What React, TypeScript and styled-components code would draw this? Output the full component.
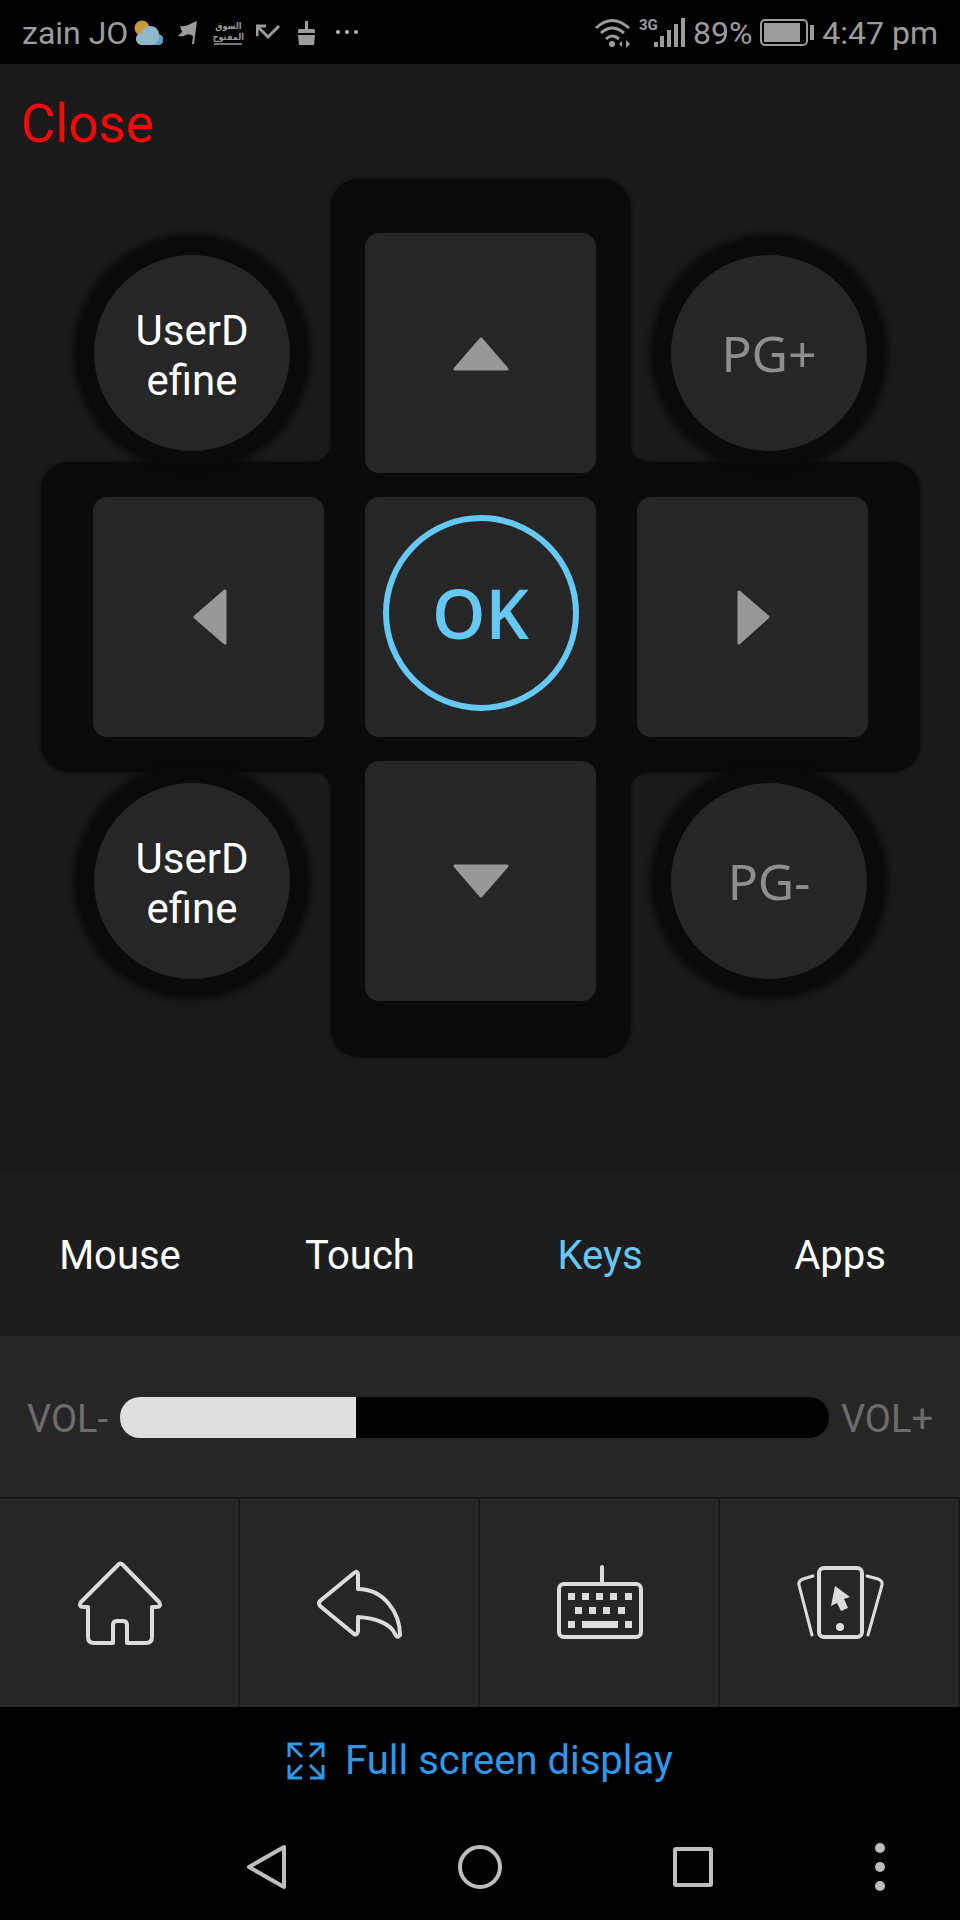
import { useState } from "react";
import styled, { createGlobalStyle, css } from "styled-components";

const color = {
  statusText: "#9c9c9c",
  panel: "#1a1a1a",
  well: "#0a0a0a",
  key: "#262626",
  keyGlyph: "#989898",
  accent: "#66c9f5",
  tabs: "#1d1d1d",
  icon: "#dcdcdc",
  link: "#2f98ea",
  nav: "#bebebe",
};

const GlobalStyle = createGlobalStyle`
  *, *::before, *::after { box-sizing: border-box; }
  body {
    margin: 0;
    background: #000;
    color: #fff;
    font-family: Roboto, "Liberation Sans", sans-serif;
  }
  button, input { font: inherit; color: inherit; }
  button { border: 0; padding: 0; margin: 0; background: none; cursor: pointer; }
  svg { display: block; }
`;

const Screen = styled.div`
  display: flex;
  flex-direction: column;
  min-height: 100vh;
  background: #000;
`;

/* Status bar */

const StatusBar = styled.header`
  display: flex;
  align-items: center;
  justify-content: space-between;
  height: 64px;
  padding: 2px 22px 0;
  font-size: 32px;
  line-height: 40px;
  color: ${color.statusText};
  white-space: nowrap;
`;

const StatusGroup = styled.div<{ $gap: number }>`
  display: flex;
  align-items: center;
  gap: ${(p) => p.$gap}px;
`;

const Carrier = styled.div`
  display: flex;
  align-items: center;
  gap: 6px;
`;

const MarketBadge = styled.span`
  display: flex;
  flex-direction: column;
  align-items: center;
  width: 28px;
  border-bottom: 2px solid #777;
  font: bold 9px/11px "DejaVu Sans Condensed", "DejaVu Sans", sans-serif;
`;

const Signal = styled.div`
  display: flex;
  align-items: flex-start;
`;

const Network = styled.span`
  width: 15px;
  font-size: 15px;
  line-height: 14px;
  font-weight: 700;
`;

/* Remote panel */

const Panel = styled.main`
  background: ${color.panel};
`;

const CloseRow = styled.div`
  display: flex;
  padding: 28px 21px 0;
`;

const CloseButton = styled.button`
  && { color: #f2090c; }
  font-size: 53px;
  line-height: 64px;
`;

const Pad = styled.div`
  display: grid;
  grid-template-columns: repeat(3, 1fr);
  grid-template-rows: repeat(3, 240px);
  column-gap: 41px;
  row-gap: 24px;
  padding: 77px 92px 168px 93px;
`;

const arm = css`
  border-radius: 28px;
  background: ${color.well};
  box-shadow: 0 0 4px ${color.well};
`;

const VerticalArm = styled.div`
  ${arm}
  grid-area: 1 / 2 / 4 / 3;
  margin: -54px -34px -56px;
`;

const HorizontalArm = styled.div`
  ${arm}
  grid-area: 2 / 1 / 3 / 4;
  margin: -35px -52px;
`;

const fillet = (at: string) =>
  `radial-gradient(circle at ${at}, transparent 19px, ${color.well} 21px)`;

/* Rounds the four inner corners where the two arms meet. */
const Fillets = styled.div`
  grid-area: 2 / 2 / 3 / 3;
  margin: -55px -54px;
  background:
    ${fillet("0 0")} 0 0 / 20px 20px no-repeat,
    ${fillet("100% 0")} 100% 0 / 20px 20px no-repeat,
    ${fillet("0 100%")} 0 100% / 20px 20px no-repeat,
    ${fillet("100% 100%")} 100% 100% / 20px 20px no-repeat;
`;

const PadKey = styled.button<{ $row: number; $col: number }>`
  grid-row: ${(p) => p.$row};
  grid-column: ${(p) => p.$col};
  display: flex;
  align-items: center;
  justify-content: center;
  border-radius: 14px;
  background: ${color.key};
`;

const OkKey = styled(PadKey)`
  padding-bottom: 8px;
`;

const OkRing = styled.span`
  display: flex;
  align-items: center;
  justify-content: center;
  width: 196px;
  height: 196px;
  border: 6px solid ${color.accent};
  border-radius: 50%;
  color: ${color.accent};
  font-family: "Open Sans", "Noto Sans", sans-serif;
  font-size: 68px;
  line-height: 72px;
  font-weight: 600;
`;

const RoundKey = styled.button<{ $row: number; $side: "start" | "end" }>`
  grid-row: ${(p) => p.$row};
  grid-column: ${(p) => (p.$side === "start" ? 1 : 3)};
  justify-self: ${(p) => p.$side};
  align-self: center;
  width: 196px;
  height: 196px;
  margin: 0 1px;
  padding: 6px 40px 0;
  border-radius: 50%;
  background: ${color.key};
  box-shadow: 0 0 6px 21px ${color.well};
  overflow-wrap: anywhere;
  && { color: #fff; }
  font-size: 42px;
  line-height: 50px;
`;

const PageKey = styled(RoundKey)`
  padding-top: 0;
  && { color: #8e8e8e; }
  font-family: "Noto Sans", "Open Sans", sans-serif;
  font-size: 50px;
`;

/* Tabs */

const Tabs = styled.nav`
  display: grid;
  grid-template-columns: repeat(4, 1fr);
  height: 167px;
  padding-top: 6px;
  background: linear-gradient(#161616, ${color.tabs} 6px);
`;

const Tab = styled.button<{ $active: boolean }>`
  && { color: ${(p) => (p.$active ? color.accent : "#fff")}; }
  font-size: 40px;
  line-height: 48px;
`;

/* Volume */

const Volume = styled.section`
  display: flex;
  align-items: center;
  gap: 12px;
  height: 161px;
  padding: 2px 27px 0;
  background: ${color.key};
`;

const VolumeButton = styled.button`
  padding-top: 2px;
  && { color: #6c6c6c; }
  font-size: 38px;
  line-height: 48px;
`;

const VolumeSlider = styled.input`
  appearance: none;
  flex: 1;
  min-width: 0;
  height: 41px;
  margin: 0;
  border-radius: 20px;
  background: linear-gradient(90deg, #dedede var(--level), #000 var(--level));
  cursor: pointer;
  &::-webkit-slider-thumb {
    appearance: none;
    width: 1px;
    height: 41px;
    background: transparent;
  }
`;

/* Action row */

const Actions = styled.div`
  display: grid;
  grid-template-columns: repeat(4, 1fr);
  height: 210px;
`;

const Action = styled.button`
  display: flex;
  align-items: center;
  justify-content: center;
  padding-left: 2px;
  background: ${color.key};
  border-top: 2px solid ${color.panel};
  border-right: 2px solid ${color.panel};
  box-shadow: inset 0 2px #2b2b2b, inset -2px -2px #2b2b2b;
`;

const LineIcon = styled.svg`
  width: 96px;
  height: 96px;
  fill: none;
  stroke: ${color.icon};
  stroke-width: 4;
  stroke-linejoin: round;
  stroke-linecap: round;
  .solid { fill: ${color.icon}; stroke: none; }
  .thin { stroke-width: 3; }
`;

/* Full screen prompt and system navigation */

const FullScreen = styled.button`
  display: flex;
  align-items: center;
  justify-content: center;
  gap: 20px;
  height: 108px;
  && { color: ${color.link}; }
  font-size: 40px;
  line-height: 48px;
`;

const SystemNav = styled.nav`
  display: grid;
  grid-template-columns: 3fr 4fr 4fr 4fr 3fr;
  height: 105px;
  padding-bottom: 2px;
`;

const NavButton = styled.button<{ $col: number }>`
  grid-column: ${(p) => p.$col};
  display: flex;
  align-items: center;
  justify-content: center;
`;

const NavIcon = styled.svg`
  width: 48px;
  height: 48px;
  fill: none;
  stroke: ${color.nav};
  stroke-width: 4;
  stroke-linejoin: round;
  .solid { fill: ${color.nav}; stroke: none; }
`;

const ARROWS = [
  { label: "Up", row: 1, col: 2, points: "32,18 58,48 6,48" },
  { label: "Left", row: 2, col: 1, points: "18,32 48,6 48,58" },
  { label: "Right", row: 2, col: 3, points: "47,32 18,7 18,58" },
  { label: "Down", row: 3, col: 2, points: "32,47 58,17 6,17" },
];

const TABS = ["Mouse", "Touch", "Keys", "Apps"];
const VOLUME_STEPS = 15;

function StatusIcons() {
  return (
    <StatusBar>
      <StatusGroup $gap={14}>
        <Carrier>
          <span>zain JO</span>
          <svg width="30" height="28" viewBox="0 0 30 28" aria-hidden="true">
            <circle cx="8" cy="9" r="7.5" fill="#c69a3c" />
            <path d="M7 26a6 6 0 0 1-5-7q1-5 6-5q1-7 8-7q8 0 9 8q5 2 4 7q-1 4-5 4z" fill="#8fb8cb" />
            <path d="M18 26q8-2 7-10q5 2 4 6q-1 4-5 4z" fill="#5e9fc6" />
          </svg>
        </Carrier>
        <svg width="22" height="26" viewBox="0 0 22 26" fill={color.statusText} aria-hidden="true">
          <path d="M19 1L16 24h-2l1-8q-4-3-7-1t-8 1l4-4-2-6q4 1 8-1t9-4z" />
        </svg>
        <MarketBadge lang="ar" dir="rtl">
          <span>السوق</span>
          <span>المفتوح</span>
        </MarketBadge>
        <svg width="26" height="26" viewBox="0 0 26 26" fill="none" stroke={color.statusText} strokeWidth="3" aria-hidden="true">
          <path d="M1 16V6h9M1 6l11 11L23 6" />
        </svg>
        <svg width="20" height="26" viewBox="6 0 20 26" fill={color.statusText} aria-hidden="true">
          <path d="M15 1h3v8h6q1 0 1 4H8q0-4 1-4h6zM8 15h17l-1 10H9z" />
        </svg>
        <svg width="30" height="26" viewBox="-4 0 30 26" fill="#b8b8b8" aria-hidden="true">
          <circle cx="4" cy="12" r="2" />
          <circle cx="13" cy="12" r="2" />
          <circle cx="22" cy="12" r="2" />
        </svg>
      </StatusGroup>
      <StatusGroup $gap={8}>
        <svg width="36" height="30" viewBox="0 0 36 30" fill="none" stroke={color.statusText} strokeWidth="3" aria-hidden="true">
          <path d="M1 10q16-15 33 0M6 15q11-10 23 0M11 21q6-6 13 0" />
          <circle cx="17" cy="26" r="3" fill={color.statusText} stroke="none" />
          <path d="M27 23l-3 3 3 3zM31 22v8l4-4z" fill={color.statusText} stroke="none" />
        </svg>
        <Signal>
          <Network>3G</Network>
          <svg width="31" height="30" viewBox="0 0 31 30" fill={color.statusText} aria-hidden="true">
            <path d="M0 24h4v5H0zM6 18h4v11H6zM13 12h4v17h-4zM20 6h4v23h-4zM27 0h4v29h-4z" />
          </svg>
        </Signal>
        <span>89%</span>
        <svg width="54" height="28" viewBox="0 0 54 28" fill={color.statusText} aria-hidden="true">
          <rect x="1" y="1" width="46" height="25" rx="4" fill="none" stroke={color.statusText} strokeWidth="2" />
          <rect x="4" y="4" width="36" height="19" />
          <rect x="50" y="6" width="4" height="15" />
        </svg>
        <span>4:47 pm</span>
      </StatusGroup>
    </StatusBar>
  );
}

function HomeIcon() {
  return (
    <LineIcon viewBox="0 0 96 96">
      <path d="M46 10Q48 7 51 10L87 47Q90 52 84 52H80V82Q80 88 74 88H55V70Q55 66 51 66H45Q41 66 41 70V88H22Q16 88 16 82V52H12Q6 52 9 47Z" />
    </LineIcon>
  );
}

function BackIcon() {
  return (
    <LineIcon viewBox="0 0 96 96">
      <path d="M8 46L42 18Q46 15 46 20V34C72 34 88 58 88 80Q85 84 83 79C79 69 64 63 46 62V76Q45 81 42 79L8 51Q6 48 8 46Z" />
    </LineIcon>
  );
}

function KeyboardIcon() {
  const rows = [
    { y: 38, xs: [16, 30, 44, 58, 73] },
    { y: 52, xs: [23, 37, 51, 66] },
    { y: 66, xs: [16, 73] },
  ];
  return (
    <LineIcon viewBox="0 0 96 96">
      <rect x="7" y="29" width="82" height="53" rx="5" />
      <path d="M50 12V29" />
      {rows.map((r) =>
        r.xs.map((x) => (
          <rect key={`${x}-${r.y}`} className="solid" x={x} y={r.y} width="7" height="7" />
        ))
      )}
      <rect className="solid" x="30" y="66" width="36" height="7" />
    </LineIcon>
  );
}

function CardsIcon() {
  return (
    <LineIcon viewBox="0 0 96 96">
      <rect x="27" y="13" width="43" height="69" rx="5" />
      <path className="thin" d="M21 21L11 24Q6 26 7 30L20 80M75 21L86 24Q91 26 90 30L76 80" />
      <path className="solid" d="M43 31L58 42L52 44L56 53L49 56L45 48L39 51Z" />
      <circle className="solid" cx="48" cy="72" r="4" />
    </LineIcon>
  );
}

const ACTIONS = [
  { label: "Home", Icon: HomeIcon },
  { label: "Back", Icon: BackIcon },
  { label: "Keyboard", Icon: KeyboardIcon },
  { label: "Switch device", Icon: CardsIcon },
];

export default function App() {
  const [tab, setTab] = useState("Keys");
  const [volume, setVolume] = useState(5);
  const level = { "--level": `${(volume / VOLUME_STEPS) * 100}%` } as React.CSSProperties;

  return (
    <Screen>
      <GlobalStyle />
      <StatusIcons />

      <Panel>
        <CloseRow>
          <CloseButton type="button">Close</CloseButton>
        </CloseRow>
        <Pad>
          <VerticalArm />
          <HorizontalArm />
          <Fillets />
          <RoundKey type="button" $row={1} $side="start">UserDefine</RoundKey>
          <PageKey type="button" $row={1} $side="end">PG+</PageKey>
          <RoundKey type="button" $row={3} $side="start">UserDefine</RoundKey>
          <PageKey type="button" $row={3} $side="end">PG-</PageKey>
          {ARROWS.map((a) => (
            <PadKey key={a.label} type="button" aria-label={a.label} $row={a.row} $col={a.col}>
              <svg width="64" height="64" viewBox="0 0 64 64">
                <polygon points={a.points} fill={color.keyGlyph} stroke={color.keyGlyph} strokeWidth="3" strokeLinejoin="round" />
              </svg>
            </PadKey>
          ))}
          <OkKey type="button" $row={2} $col={2}>
            <OkRing>OK</OkRing>
          </OkKey>
        </Pad>
      </Panel>

      <Tabs>
        {TABS.map((name) => (
          <Tab key={name} type="button" $active={name === tab} onClick={() => setTab(name)}>
            {name}
          </Tab>
        ))}
      </Tabs>

      <Volume>
        <VolumeButton type="button" onClick={() => setVolume(Math.max(0, volume - 1))}>VOL-</VolumeButton>
        <VolumeSlider
          type="range"
          aria-label="Volume"
          min={0}
          max={VOLUME_STEPS}
          value={volume}
          style={level}
          onChange={(e) => setVolume(Number(e.target.value))}
        />
        <VolumeButton type="button" onClick={() => setVolume(Math.min(VOLUME_STEPS, volume + 1))}>VOL+</VolumeButton>
      </Volume>

      <Actions>
        {ACTIONS.map(({ label, Icon }) => (
          <Action key={label} type="button" aria-label={label}>
            <Icon />
          </Action>
        ))}
      </Actions>

      <FullScreen type="button">
        <svg width="38" height="38" viewBox="0 0 38 38" fill="none" stroke="currentColor" strokeWidth="3" aria-hidden="true">
          <path d="M2 15V2H15M2 2L15 15M23 2H36V15M36 2L23 15M2 23V36H15M2 36L15 23M36 23V36H23M36 36L23 23" />
        </svg>
        Full screen display
      </FullScreen>

      <SystemNav>
        <NavButton type="button" aria-label="System back" $col={2}>
          <NavIcon viewBox="0 0 48 48">
            <path d="M41 4V44L6 24Z" />
          </NavIcon>
        </NavButton>
        <NavButton type="button" aria-label="System home" $col={3}>
          <NavIcon viewBox="0 0 48 48">
            <circle cx="24" cy="24" r="20" />
          </NavIcon>
        </NavButton>
        <NavButton type="button" aria-label="Recent apps" $col={4}>
          <NavIcon viewBox="0 0 48 48">
            <rect x="6" y="6" width="36" height="36" rx="1" />
          </NavIcon>
        </NavButton>
        <NavButton type="button" aria-label="More" $col={5}>
          <NavIcon viewBox="0 0 48 48">
            <circle className="solid" cx="24" cy="5" r="5" />
            <circle className="solid" cx="24" cy="24" r="5" />
            <circle className="solid" cx="24" cy="43" r="5" />
          </NavIcon>
        </NavButton>
      </SystemNav>
    </Screen>
  );
}
